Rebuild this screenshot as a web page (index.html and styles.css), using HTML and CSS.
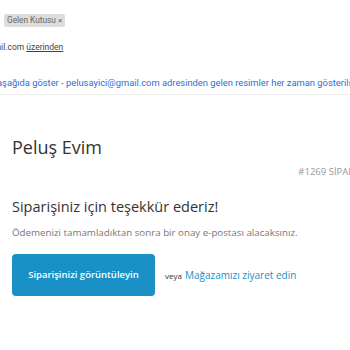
FILE: index.html
```html
<!DOCTYPE html>
<html lang="tr">
<head>
    <meta charset="UTF-8">
    <title>Siparişiniz için teşekkür ederiz!</title>
    <link rel="stylesheet" href="styles.css">
</head>
<body>
    <div class="mail-head">
        <span class="label">Gelen Kutusu <span class="label-x">×</span></span>
        <p class="sender">pelusayici@gmail.com <u>üzerinden</u></p>
    </div>

    <div class="images-bar">
        <span>Resimleri aşağıda göster - pelusayici@gmail.com adresinden gelen resimler her zaman gösterilsin</span>
    </div>

    <div class="mail-body">
        <div class="shop-header">
            <h1 class="shop-name">Peluş Evim</h1>
            <div class="order-no">#1269 SİPARİŞ</div>
        </div>

        <h2 class="thanks">Siparişiniz için teşekkür ederiz!</h2>
        <p class="note">Ödemenizi tamamladıktan sonra bir onay e-postası alacaksınız.</p>

        <div class="actions">
            <a class="btn" href="#">Siparişinizi görüntüleyin</a>
            <span class="or">veya</span>
            <a class="store-link" href="#">Mağazamızı ziyaret edin</a>
        </div>
    </div>
</body>
</html>
```

FILE: styles.css
```css
body {
    margin: 0;
    width: 350px;
    height: 350px;
    overflow: hidden;
    background-color: #fff;
    font-family: "Open Sans", "Noto Sans", sans-serif;
}
.mail-head {
    font-family: Roboto, Arial, sans-serif;
    padding-top: 8px;
    white-space: nowrap;
    overflow: hidden;
}
.label {
    display: inline-block;
    margin-left: 4px;
    padding: 0 3px;
    background-color: #ddd;
    color: #666;
    font-size: 8.3px;
    line-height: 12px;
    border-radius: 2px;
}
.label-x {
    font-size: 8px;
}
.sender {
    margin: 15px 0 0 -61px;
    font-size: 8.5px;
    color: #444;
}
.images-bar {
    margin-top: 25px;
    padding-bottom: 6px;
    border-bottom: 1px solid #eee;
    white-space: nowrap;
    overflow: hidden;
    font-family: Roboto, Arial, sans-serif;
    font-size: 9.35px;
    color: #2a6fd6;
}
.images-bar span {
    display: inline-block;
    margin-left: -44px;
}
.mail-body {
    padding: 40px 0 0 12px;
}
.shop-header {
    display: flex;
    flex-direction: column;
    width: 350px;
}
.shop-name {
    margin: 0;
    font-size: 18px;
    font-weight: normal;
    color: #333;
    line-height: 24px;
}
.order-no {
    align-self: flex-end;
    margin-top: 6px;
    font-size: 9.5px;
    color: #999;
    white-space: nowrap;
}
.thanks {
    margin: 18px 0 0;
    font-size: 14.5px;
    font-weight: normal;
    color: #333;
    line-height: 22px;
}
.note {
    margin: 8px 0 0;
    font-size: 9.75px;
    color: #777;
    white-space: nowrap;
}
.actions {
    display: flex;
    align-items: center;
    margin-top: 15px;
}
.btn {
    display: block;
    width: 143px;
    height: 42px;
    line-height: 42px;
    text-align: center;
    background-color: #1990c6;
    color: #fff;
    font-size: 9.5px;
    font-weight: 600;
    text-decoration: none;
    border-radius: 4px;
}
.or {
    margin-left: 10px;
    font-size: 8px;
    color: #333;
}
.store-link {
    margin-left: 3px;
    font-size: 10px;
    color: #1990c6;
    text-decoration: none;
}
```
